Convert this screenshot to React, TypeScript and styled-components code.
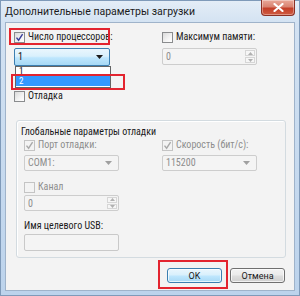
import React from 'react';
import styled, { createGlobalStyle } from 'styled-components';

const Global = createGlobalStyle`
  html, body { margin: 0; padding: 0; background: #ffffff; }
  body { width: 300px; height: 296px; overflow: hidden; font-family: Roboto, "Noto Sans", sans-serif; }
  * { box-sizing: border-box; }
`;

const Window = styled.div`
  width: 300px;
  height: 296px;
  display: flex;
  flex-direction: column;
  border: 1px solid #7f9ab9;
  padding: 0 4px 4px 4px;
  background: linear-gradient(180deg, #e4edf7 0px, #d3e2f2 22px, #bcd3ec 100%);
`;

const TitleBar = styled.div`
  height: 21px;
  display: flex;
  align-items: flex-start;
  flex: none;
`;

const Title = styled.div`
  padding: 4px 0 0 0;
  font-size: 10.5px;
  line-height: 13px;
  color: #1b1b1b;
`;

const CloseButton = styled.div`
  margin-left: auto;
  width: 34px;
  height: 16px;
  margin-top: -1px;
  border: 1px solid #8b3024;
  border-top: none;
  border-radius: 0 0 4px 4px;
  background: linear-gradient(180deg, #eaa899 0%, #d98371 45%, #c43e28 55%, #cf5c42 100%);
  display: flex;
  align-items: center;
  justify-content: center;
  box-shadow: inset 0 0 0 1px rgba(255, 255, 255, 0.35);
`;

const Client = styled.div`
  flex: 1;
  background: #f3f3f3;
  border: 1px solid #9fb3ca;
  display: flex;
  flex-direction: column;
  padding: 8px 8px 0 8px;
`;

const TopSection = styled.div`
  display: grid;
  grid-template-columns: 148px 1fr;
`;

const Column = styled.div`
  display: flex;
  flex-direction: column;
  align-items: flex-start;
  position: relative;
`;

const CheckRow = styled.label<{ $mt?: number; $disabled?: boolean }>`
  display: inline-flex;
  align-items: center;
  gap: 3px;
  height: 12px;
  margin-top: ${p => p.$mt ?? 0}px;
  font-size: 10px;
  font-stretch: 80%;
  line-height: 12px;
  color: ${p => (p.$disabled ? '#8d8d8d' : '#1b1b1b')};
  position: relative;
  white-space: nowrap;
`;

const Highlight = styled.span<{ $l: number; $t: number; $w: number; $h: number }>`
  position: absolute;
  left: ${p => p.$l}px;
  top: ${p => p.$t}px;
  width: ${p => p.$w}px;
  height: ${p => p.$h}px;
  border: 2px solid #e3242f;
  pointer-events: none;
  z-index: 5;
`;

const Box = styled.span<{ $disabled?: boolean }>`
  width: 11px;
  height: 11px;
  flex: none;
  border: 1px solid ${p => (p.$disabled ? '#c4c4c4' : '#8a8c8e')};
  background: ${p =>
    p.$disabled ? '#f3f3f3' : 'linear-gradient(135deg, #dadada 0%, #f4f4f4 60%, #ffffff 100%)'};
  display: inline-flex;
  align-items: center;
  justify-content: center;
`;

const Combo = styled.div<{ $w: number; $h: number; $mt: number; $focused?: boolean; $disabled?: boolean }>`
  width: ${p => p.$w}px;
  height: ${p => p.$h}px;
  margin-top: ${p => p.$mt}px;
  display: flex;
  align-items: center;
  padding: 0 6px 0 3px;
  border: 1px solid ${p => (p.$focused ? '#3c7fb1' : p.$disabled ? '#cdcdcd' : '#8e8f8f')};
  border-radius: 2px;
  background: ${p =>
    p.$focused
      ? 'linear-gradient(180deg, #eaf6fd 0%, #d9f0fc 45%, #bee6fd 55%, #a7d9f5 100%)'
      : '#f4f4f4'};
  font-size: 10px;
  font-stretch: 80%;
  color: ${p => (p.$disabled ? '#8d8d8d' : '#111111')};
  position: relative;
`;

const ComboText = styled.span`
  flex: 1;
  line-height: 12px;
`;

const DropList = styled.div`
  position: absolute;
  left: 0;
  top: 17px;
  width: 96px;
  background: #ffffff;
  border: 1px solid #646464;
  display: flex;
  flex-direction: column;
  padding: 0 0 1px 0;
  z-index: 3;
`;

const ListItem = styled.div<{ $selected?: boolean }>`
  height: ${p => (p.$selected ? 10 : 9)}px;
  line-height: ${p => (p.$selected ? 10 : 9)}px;
  padding-left: 3px;
  font-size: 9px;
  color: ${p => (p.$selected ? '#ffffff' : '#111111')};
  background: ${p => (p.$selected ? '#3399ff' : 'transparent')};
  position: relative;
`;

const Spin = styled.div<{ $w: number; $h: number; $mt: number }>`
  width: ${p => p.$w}px;
  height: ${p => p.$h}px;
  margin-top: ${p => p.$mt}px;
  display: flex;
  align-items: stretch;
  border: 1px solid #cdcdcd;
  border-radius: 2px;
  background: #f4f4f4;
  font-size: 10px;
  font-stretch: 80%;
  color: #8d8d8d;
`;

const SpinText = styled.span`
  flex: 1;
  padding-left: 3px;
  display: flex;
  align-items: center;
`;

const SpinButtons = styled.div`
  width: 11px;
  display: flex;
  flex-direction: column;
  gap: 1px;
  padding: 1px 1px 1px 0;
`;

const SpinButton = styled.div`
  flex: 1;
  border: 1px solid #d6d6d6;
  background: #f6f6f6;
  display: flex;
  align-items: center;
  justify-content: center;
`;

const TextField = styled.div<{ $w: number; $h: number; $mt: number }>`
  width: ${p => p.$w}px;
  height: ${p => p.$h}px;
  margin-top: ${p => p.$mt}px;
  border: 1px solid #c9c9c9;
  border-radius: 2px;
  background: #f4f4f4;
`;

const Group = styled.div`
  margin: 18px 0 0 2px;
  height: 138px;
  border: 1px solid #d3dbe0;
  border-radius: 3px;
  box-shadow: inset 1px 1px 0 #ffffff;
  padding: 5px 0 0 7px;
  display: flex;
  flex-direction: column;
`;

const GroupLabel = styled.div`
  margin-left: -3px;
  font-size: 10px;
  font-stretch: 80%;
  line-height: 12px;
  height: 12px;
  color: #1b1b1b;
  white-space: nowrap;
`;

const GroupGrid = styled.div`
  display: grid;
  grid-template-columns: 138px 1fr;
`;

const FieldLabel = styled.div<{ $mt: number }>`
  margin-top: ${p => p.$mt}px;
  font-size: 10px;
  font-stretch: 80%;
  line-height: 12px;
  height: 12px;
  color: #1b1b1b;
  white-space: nowrap;
`;

const ButtonRow = styled.div`
  display: flex;
  justify-content: flex-end;
  gap: 8px;
  margin-top: 10px;
  padding-right: 1px;
`;

const Button = styled.div<{ $default?: boolean }>`
  width: 55px;
  height: 15px;
  border: 1px solid ${p => (p.$default ? '#3c7fb1' : '#707070')};
  border-radius: 3px;
  background: ${p =>
    p.$default
      ? 'linear-gradient(180deg, #eaf6fd 0%, #d9f0fc 45%, #bee6fd 55%, #a7d9f5 100%)'
      : 'linear-gradient(180deg, #f2f2f2 0%, #ebebeb 45%, #dddddd 55%, #cfcfcf 100%)'};
  box-shadow: inset 0 0 0 1px rgba(255, 255, 255, 0.7);
  display: flex;
  align-items: center;
  justify-content: center;
  font-size: 9px;
  color: #1b1b1b;
  position: relative;
`;

const Check = ({ disabled }: { disabled?: boolean }) => (
  <svg width="9" height="9" viewBox="0 0 9 9">
    <path
      d="M1.5 4.6 L3.6 7.2 L7.6 1.2"
      fill="none"
      stroke={disabled ? '#a9a9a9' : '#3a3f9a'}
      strokeWidth="1.4"
    />
  </svg>
);

const Arrow = ({ color }: { color: string }) => (
  <svg width="7" height="4" viewBox="0 0 7 4">
    <path d="M0 0 H7 L3.5 4 Z" fill={color} />
  </svg>
);

const TinyArrow = ({ up }: { up?: boolean }) => (
  <svg width="5" height="3" viewBox="0 0 5 3">
    <path d={up ? 'M0 3 H5 L2.5 0 Z' : 'M0 0 H5 L2.5 3 Z'} fill="#b0b0b0" />
  </svg>
);

export default function App() {
  return (
    <>
      <Global />
      <Window>
        <TitleBar>
          <Title>Дополнительные параметры загрузки</Title>
          <CloseButton>
            <svg width="11" height="9" viewBox="0 0 11 9">
              <path d="M1.5 1 L9.5 8 M9.5 1 L1.5 8" stroke="#ffffff" strokeWidth="2.2" strokeLinecap="round" />
            </svg>
          </CloseButton>
        </TitleBar>
        <Client>
          <TopSection>
            <Column>
              <CheckRow>
                <Box>
                  <Check />
                </Box>
                Число процессоров:
                <Highlight $l={-5} $t={-3} $w={101} $h={17} />
              </CheckRow>
              <Combo $w={96} $h={18} $mt={5} $focused>
                <ComboText>1</ComboText>
                <Arrow color="#1b1b1b" />
                <DropList>
                  <ListItem>1</ListItem>
                  <ListItem $selected>
                    2
                    <Highlight $l={-5} $t={-2} $w={114} $h={16} />
                  </ListItem>
                </DropList>
              </Combo>
              <CheckRow $mt={24}>
                <Box />
                Отладка
              </CheckRow>
            </Column>
            <Column>
              <CheckRow>
                <Box />
                Максимум памяти:
              </CheckRow>
              <Spin $w={95} $h={17} $mt={5}>
                <SpinText>0</SpinText>
                <SpinButtons>
                  <SpinButton>
                    <TinyArrow up />
                  </SpinButton>
                  <SpinButton>
                    <TinyArrow />
                  </SpinButton>
                </SpinButtons>
              </Spin>
            </Column>
          </TopSection>
          <Group>
            <GroupLabel>Глобальные параметры отладки</GroupLabel>
            <GroupGrid>
              <Column>
                <CheckRow $mt={1} $disabled>
                  <Box $disabled>
                    <Check disabled />
                  </Box>
                  Порт отладки:
                </CheckRow>
                <Combo $w={95} $h={16} $mt={4} $disabled>
                  <ComboText>COM1:</ComboText>
                  <Arrow color="#a0a0a0" />
                </Combo>
                <CheckRow $mt={10} $disabled>
                  <Box $disabled />
                  Канал
                </CheckRow>
                <Spin $w={95} $h={16} $mt={2}>
                  <SpinText>0</SpinText>
                  <SpinButtons>
                    <SpinButton>
                      <TinyArrow up />
                    </SpinButton>
                    <SpinButton>
                      <TinyArrow />
                    </SpinButton>
                  </SpinButtons>
                </Spin>
                <FieldLabel $mt={9}>Имя целевого USB:</FieldLabel>
                <TextField $w={95} $h={17} $mt={2} />
              </Column>
              <Column>
                <CheckRow $mt={1} $disabled>
                  <Box $disabled>
                    <Check disabled />
                  </Box>
                  Скорость (бит/с):
                </CheckRow>
                <Combo $w={95} $h={16} $mt={4} $disabled>
                  <ComboText>115200</ComboText>
                  <Arrow color="#a0a0a0" />
                </Combo>
              </Column>
            </GroupGrid>
          </Group>
          <ButtonRow>
            <Button $default>
              OK
              <Highlight $l={-10} $t={-9} $w={70} $h={29} />
            </Button>
            <Button>Отмена</Button>
          </ButtonRow>
        </Client>
      </Window>
    </>
  );
}
